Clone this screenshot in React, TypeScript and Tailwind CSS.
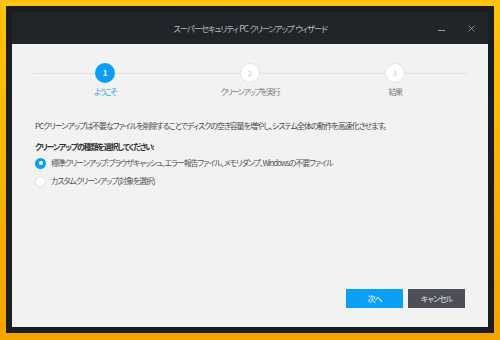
import { Minus, X } from "lucide-react";

const font = "font-['Noto_Sans_CJK_JP','Noto_Sans',sans-serif] [font-feature-settings:'palt']";

const steps = [
  { n: 1, label: "ようこそ", active: true },
  { n: 2, label: "クリーンアップを実行", active: false },
  { n: 3, label: "結果", active: false },
];

export default function App() {
  return (
    <div className={`w-[500px] h-[340px] bg-gradient-to-b from-[#ffc30d] to-[#f4a300] pt-[6px] pb-[7px] px-[6px] ${font}`}>
      <div className="h-full bg-[#1b1e21] p-[6px] flex flex-col">
        {/* title bar */}
        <div className="h-[32px] bg-[#212428] relative flex items-center justify-center">
          <span className="text-[8.5px] tracking-[-1.2px] [word-spacing:1px] text-[#b4b7ba]">スーパーセキュリティ PC クリーンアップ ウィザード</span>
          <div className="absolute right-[11px] top-0 h-full flex items-center gap-[19px] text-[#a0a4a8]">
            <Minus size={11} strokeWidth={2} className="mt-[4px]" />
            <X size={11} strokeWidth={1.6} />
          </div>
        </div>

        {/* content */}
        <div className="flex-1 bg-[#f2f2f2] flex flex-col px-[23px] leading-[12px]">
          <div className="relative mt-[19px] grid grid-cols-3 mx-[-2.5px]">
            <div className="absolute left-0 right-0 top-[9.5px] h-[1px] bg-[#e2e2e2]" />
            {steps.map((s) => (
              <div key={s.n} className="relative flex flex-col items-center">
                <div
                  className={
                    s.active
                      ? "w-[20px] h-[20px] rounded-full bg-[#0a9ef7] text-white text-[8px] font-bold flex items-center justify-center"
                      : "w-[20px] h-[20px] rounded-full bg-white border border-[#e4e4e4] text-[#c4c4c4] text-[7px] flex items-center justify-center"
                  }
                >
                  {s.n}
                </div>
                <span className={`mt-[3px] text-[8px] tracking-[-1.4px] ${s.active ? "text-[#2b9ff0]" : "text-[#7a7a7a]"}`}>{s.label}</span>
              </div>
            ))}
          </div>

          <p className="mt-[22px] text-[8px] tracking-[-1.05px] text-[#4a4a4a] whitespace-nowrap">
            PCクリーンアップは不要なファイルを削除することでディスクの空き容量を増やし、システム全体の動作を高速化させます。
          </p>
          <p className="mt-[9px] text-[8px] tracking-[-1.2px] font-bold text-[#333]">クリーンアップの種類を選択してください:</p>

          <div className="mt-[4px] flex flex-col gap-[6px] text-[8px] tracking-[-1.1px] text-[#555]">
            <label className="flex items-center gap-[5px] whitespace-nowrap">
              <span className="w-[11px] h-[11px] rounded-full bg-[#0a9ef7] flex items-center justify-center">
                <span className="w-[4px] h-[4px] rounded-full bg-white" />
              </span>
              標準クリーンアップ: ブラウザキャッシュ、エラー報告ファイル、メモリダンプ、Windowsの不要ファイル
            </label>
            <label className="flex items-center gap-[5px]">
              <span className="w-[11px] h-[11px] rounded-full bg-white border border-[#e2e2e2]" />
              カスタムクリーンアップ(対象を選択)
            </label>
          </div>

          <div className="mt-auto mb-[19px] flex justify-end gap-[5px]">
            <button className="w-[57px] h-[19px] bg-[#0aa0f7] text-white text-[8px] tracking-[-1px]">次へ</button>
            <button className="w-[57px] h-[19px] bg-[#4a5055] text-[#e0e0e0] text-[8px] tracking-[-1px]">キャンセル</button>
          </div>
        </div>
      </div>
    </div>
  );
}
